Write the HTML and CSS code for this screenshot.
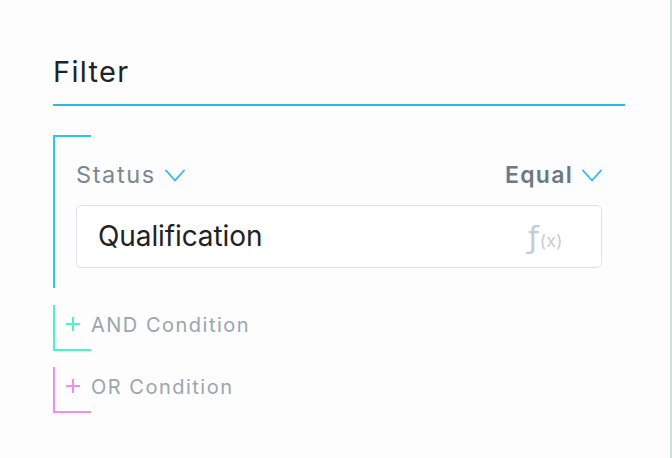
FILE: index.html
```html
<!DOCTYPE html>
<html>
<head>
<meta charset="utf-8">
<link rel="stylesheet" href="styles.css">
</head>
<body>
<div class="page">
  <div class="panel">
    <div class="title">Filter</div>

    <div class="group group-blue">
      <div class="cap"></div>
      <div class="fields">
        <div class="row">
          <div class="select">
            <span class="label">Status</span>
            <svg class="chev" width="20" height="13" viewBox="0 0 20 13"><polyline points="1,1.5 10,11.5 19,1.5" fill="none" stroke="#2bb9ee" stroke-width="1.8" stroke-linejoin="round" stroke-linecap="round"/></svg>
          </div>
          <div class="select">
            <span class="label label-bold">Equal</span>
            <svg class="chev" width="20" height="13" viewBox="0 0 20 13"><polyline points="1,1.5 10,11.5 19,1.5" fill="none" stroke="#2bb9ee" stroke-width="1.8" stroke-linejoin="round" stroke-linecap="round"/></svg>
          </div>
        </div>
        <div class="input">
          <span class="value">Qualification</span>
          <span class="fx"><span class="fx-f">ƒ</span><span class="fx-x">(x)</span></span>
        </div>
      </div>
    </div>

    <div class="group group-green">
      <div class="crow">
        <svg class="plus" width="14" height="14" viewBox="0 0 14 14"><path d="M7 0V14M0 7H14" stroke="#4ef3c6" stroke-width="2"/></svg>
        <span class="ctext">AND Condition</span>
      </div>
      <div class="cap"></div>
    </div>

    <div class="group group-pink">
      <div class="crow">
        <svg class="plus" width="14" height="14" viewBox="0 0 14 14"><path d="M7 0V14M0 7H14" stroke="#f28cf0" stroke-width="2"/></svg>
        <span class="ctext">OR Condition</span>
      </div>
      <div class="cap"></div>
    </div>
  </div>
</div>
</body>
</html>
```

FILE: styles.css
```css
html, body {
  margin: 0;
  padding: 0;
  background: #fdfdfd;
}
body {
  font-family: Inter, "Noto Sans", sans-serif;
}
.page {
  width: 670px;
  height: 458px;
  border-right: 2px solid #d3dde5;
}
.panel {
  margin-left: 53px;
  width: 572px;
  padding-top: 55px;
}
.title {
  font-size: 29px;
  line-height: 34px;
  color: #1f2327;
  letter-spacing: 1.3px;
  padding-bottom: 15px;
  border-bottom: 2px solid #2cb6e9;
}
.group {
  border-left: 2px solid;
  margin-right: 23px;
}
.group-blue {
  border-color: #2ec3f5;
  margin-top: 29px;
}
.group-green {
  border-color: #4ef3c6;
  margin-top: 17px;
}
.group-pink {
  border-color: #f28cf0;
  margin-top: 16px;
}
.cap {
  width: 36px;
  height: 2px;
}
.group-blue .cap { background: #2ec3f5; }
.group-green .cap { background: #4ef3c6; }
.group-pink .cap { background: #f28cf0; }

.fields {
  padding: 25px 0 20px 21px;
}
.row {
  display: flex;
  justify-content: space-between;
  align-items: center;
  height: 26px;
  margin-bottom: 17px;
}
.select {
  display: flex;
  align-items: center;
}
.label {
  font-size: 23.5px;
  line-height: 26px;
  color: #7a8794;
  letter-spacing: 1.6px;
}
.label-bold {
  font-size: 23px;
  font-weight: 600;
  color: #6c7985;
  letter-spacing: 1.3px;
}
.chev {
  margin-left: 9px;
  margin-top: 1px;
}
.input {
  height: 63px;
  box-sizing: border-box;
  border: 1.5px solid #dde2e7;
  border-radius: 5px;
  background: #ffffff;
  display: flex;
  align-items: center;
  justify-content: space-between;
  padding: 0 38px 0 21px;
}
.value {
  font-size: 28px;
  line-height: 34px;
  color: #1e2226;
  letter-spacing: -0.1px;
  margin-top: -2px;
}
.fx {
  color: #c5ccd3;
  display: flex;
  align-items: flex-end;
}
.fx-f {
  font-family: "DejaVu Sans", sans-serif;
  font-size: 31px;
  line-height: 30px;
}
.fx-x {
  font-size: 17px;
  line-height: 22px;
  margin-left: 1px;
  letter-spacing: 0.5px;
}
.crow {
  height: 40px;
  padding-bottom: 4px;
  padding-left: 11px;
  display: flex;
  align-items: center;
}
.plus {
  margin-right: 11px;
  margin-top: -2px;
}
.ctext {
  font-size: 20px;
  line-height: 24px;
  color: #9aa5ae;
  letter-spacing: 1.5px;
}
```
